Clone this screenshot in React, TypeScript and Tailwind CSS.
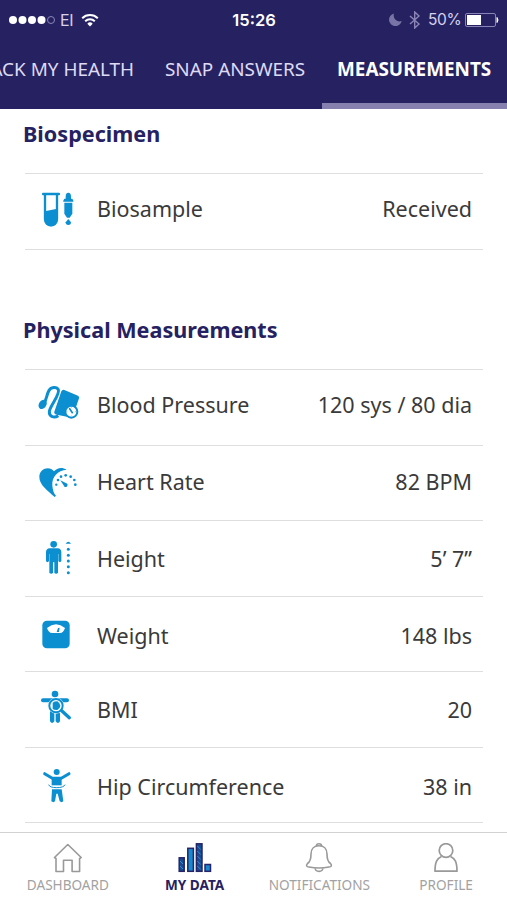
import type { ReactNode } from 'react';

const BLUE = '#0c8fd0';

function BiosampleIcon() {
  return (
    <svg viewBox="0 0 180 180" className="size-[60px] shrink-0" fill={BLUE}>
      <rect x="36" y="38" width="54" height="8" rx="3" />
      <path d="M45 44v74a18 18 0 0 0 36 0V44" fill="none" stroke={BLUE} strokeWidth="7" />
      <path d="M44 94l38-8v34a19 19 0 0 1-38 0z" />
      <path d="M107 50a8 12 0 0 1 16 0v6h4q5 8 3 9H100q-2-1 3-9h4z" />
      <path d="M103 68h24v33l-8 12h-8l-8-12z" />
      <path d="M115 117l8 10a8 8 0 1 1-16 0z" />
    </svg>
  );
}

function BloodPressureIcon() {
  return (
    <svg viewBox="0 0 180 180" className="size-[60px] shrink-0" fill={BLUE}>
      <path d="M94 49q3-6 9-4l41 17q5 3 3 8l-20 58-47-9q-9-3-7-9z" />
      <path d="M42 84c8-10 8-24 14-36 6-13 24-14 29-4 6 15-26 50-27 66-1 16 15 20 27 12" fill="none" stroke={BLUE} strokeWidth="9" />
      <ellipse cx="38" cy="88" rx="11" ry="15" transform="rotate(35 38 88)" />
      <circle cx="124" cy="110" r="18" fill="#fff" stroke={BLUE} strokeWidth="6" />
      <path d="M119 101l8 12" stroke={BLUE} strokeWidth="5" strokeLinecap="round" />
      <path d="M124 96v2M136 110h2M124 122v2M110 110h2" stroke={BLUE} strokeWidth="2" />
    </svg>
  );
}

function HeartRateIcon() {
  return (
    <svg viewBox="0 0 180 180" className="size-[60px] shrink-0" fill={BLUE}>
      <path d="M74 135C53 116 28 99 28 75c0-26 31-34 44-17 9-11 24-14 38-5-27 2-45 21-43 48 1 13 5 24 11 30z" />
      <circle cx="79" cy="98" r="3.5" />
      <circle cx="84" cy="84" r="4" />
      <circle cx="93" cy="74" r="4" />
      <circle cx="107" cy="70" r="4" />
      <circle cx="122" cy="74" r="4" />
      <circle cx="133" cy="84" r="4" />
      <circle cx="136" cy="98" r="4" />
      <path d="M91 85l21 10a7 7 0 0 1-8 10z" />
    </svg>
  );
}

function HeightIcon() {
  return (
    <svg viewBox="0 0 180 180" className="size-[60px] shrink-0" fill={BLUE}>
      <circle cx="71" cy="43" r="10" />
      <path d="M59 55h24q11 1 11 12v27q-4 5-9 0V72h-1v57q-6 5-11 0V97h-4v32q-5 5-11 0V72h-1v22q-5 5-9 0V67q0-11 11-12z" />
      <path d="M107 41q8-11 16 0z" />
      <circle cx="115" cy="58" r="4.5" />
      <circle cx="115" cy="76" r="4.5" />
      <circle cx="115" cy="93" r="4.5" />
      <circle cx="115" cy="110" r="4.5" />
      <circle cx="115" cy="128" r="4.5" />
    </svg>
  );
}

function WeightIcon() {
  return (
    <svg viewBox="0 0 180 180" className="size-[60px] shrink-0" fill={BLUE}>
      <rect x="37" y="47" width="82" height="83" rx="14" />
      <path d="M51 69q27-22 54 0-5 15-15 15H66q-10 0-15-15z" fill="#fff" />
      <path d="M80 81l4-12 5-1-2 13z" />
    </svg>
  );
}

function BmiIcon() {
  return (
    <svg viewBox="0 0 180 180" className="size-[60px] shrink-0" fill={BLUE}>
      <circle cx="75" cy="42" r="10" />
      <rect x="33" y="55" width="84" height="12" rx="6" />
      <path d="M60 62h30v62q-6 10-13 0V98h-4v26q-7 10-13 0z" />
      <circle cx="78" cy="77" r="24" fill="#fff" />
      <path d="M91 91l27 23" stroke="#fff" strokeWidth="15" />
      <circle cx="78" cy="77" r="20" fill="#fff" stroke={BLUE} strokeWidth="6" />
      <path d="M68 68q5-4 14-4 9 6 9 13t-9 13q-8 1-14-3z" />
      <path d="M95 92l23 21" stroke={BLUE} strokeWidth="10" strokeLinecap="round" />
    </svg>
  );
}

function HipIcon() {
  return (
    <svg viewBox="0 0 180 180" className="size-[60px] shrink-0" fill={BLUE}>
      <circle cx="80" cy="45" r="9" />
      <path d="M44 50l23 14h27l23-14" fill="none" stroke={BLUE} strokeWidth="9" strokeLinecap="round" strokeLinejoin="round" />
      <path d="M65 60h30v25H65z" />
      <path d="M66 97h29l5 36q-5 5-11 0l-6-23h-4l-4 23q-5 5-11 0z" />
      <path d="M56 83q3 9 24 9t25-9" fill="none" stroke={BLUE} strokeWidth="3" />
    </svg>
  );
}

type RowProps = {
  icon: ReactNode;
  label: string;
  value: string;
  className: string;
  iconClass: string;
  textClass: string;
};

const physicalRows: RowProps[] = [
  { icon: <BloodPressureIcon />, label: 'Blood Pressure', value: '120 sys / 80 dia', className: 'h-[76px]', iconClass: 'mt-[5px]', textClass: 'mt-5' },
  { icon: <HeartRateIcon />, label: 'Heart Rate', value: '82 BPM', className: 'h-[75px]', iconClass: 'mt-1.5', textClass: 'mt-[21px]' },
  { icon: <HeightIcon />, label: 'Height', value: '5’ 7”', className: 'h-[76px]', iconClass: 'mt-[9px]', textClass: 'mt-[23px]' },
  { icon: <WeightIcon />, label: 'Weight', value: '148 lbs', className: 'h-[75px]', iconClass: 'mt-2', textClass: 'mt-6' },
  { icon: <BmiIcon />, label: 'BMI', value: '20', className: 'h-[76px]', iconClass: 'mt-2', textClass: 'mt-[23px]' },
  { icon: <HipIcon />, label: 'Hip Circumference', value: '38 in', className: 'h-[75px]', iconClass: 'mt-[9px]', textClass: 'mt-6' },
];

function Row({ icon, label, value, className, iconClass, textClass }: RowProps) {
  return (
    <div className={`flex items-start border-t border-[#dedede] pl-[5px] pr-[11px] ${className}`}>
      <div className={`mr-[7px] ${iconClass}`}>{icon}</div>
      <div className={`flex flex-1 justify-between text-[21.5px] leading-[30px] text-[#3a3a3a] ${textClass}`}>
        <span>{label}</span>
        <span>{value}</span>
      </div>
    </div>
  );
}

function StatusBar() {
  return (
    <div className="flex h-[39px] items-center font-[Inter,sans-serif] text-[16px] leading-5 text-[#d5d1ec]">
      <div className="flex flex-1 items-center pl-[9px]">
        <svg viewBox="0 0 46 10" className="h-2.5 w-[46px]" fill="#fff">
          <circle cx="4" cy="5" r="4" />
          <circle cx="13.5" cy="5" r="4" />
          <circle cx="23" cy="5" r="4" />
          <circle cx="32.5" cy="5" r="4" />
          <circle cx="42" cy="5" r="3.5" fill="none" stroke="#8c87b8" />
        </svg>
        <span className="ml-[5px] w-[14px] tracking-tight">EI</span>
        <svg viewBox="0 0 18 14" className="ml-[7px] h-3.5 w-[18px]" fill="none" stroke="#fff" strokeWidth="2">
          <path d="M1.2 5.2a11.2 11.2 0 0 1 15.6 0M4.2 8.2a7 7 0 0 1 9.6 0" />
          <path d="M9 13.4L6.3 10.7a3.8 3.8 0 0 1 5.4 0z" fill="#fff" stroke="none" />
        </svg>
      </div>
      <span className="text-[16.5px] font-semibold text-white">15:26</span>
      <div className="flex flex-1 items-center justify-end pr-2">
        <svg viewBox="0 0 13 13" className="size-[13px]" fill="#7974a6">
          <path d="M5 .5A6.4 6.4 0 1 0 12.7 8 6 6 0 0 1 5 .5z" />
        </svg>
        <svg viewBox="0 0 12 18" className="ml-[7px] h-[18px] w-3" fill="none" stroke="#8a85b5" strokeWidth="1.4">
          <path d="M1 5l9 8-4.3 4V1L10 5l-9 8" />
        </svg>
        <span className="ml-[7px] w-[33px] text-[15.5px] tracking-[-0.4px]">50%</span>
        <svg viewBox="0 0 34 14" className="ml-1 h-3.5 w-[34px]">
          <rect x=".5" y=".5" width="30" height="13" rx="1.5" fill="none" stroke="#8983b6" />
          <rect x="2" y="2" width="14" height="10" fill="#fff" />
          <path d="M32 4.5q2 2.5 0 5z" fill="#fff" stroke="#fff" />
        </svg>
      </div>
    </div>
  );
}

function BottomNav() {
  return (
    <nav className="flex h-[68px] border-t border-[#d2d2d2] bg-white text-[13.6px] leading-[19px] text-[#a2a2a2]">
      <div className="flex w-[136px] flex-col items-center">
        <svg viewBox="0 0 30 32" className="mt-2.5 h-8 w-[30px]" fill="none" stroke="#999" strokeWidth="1.6" strokeLinejoin="round">
          <path d="M1.5 14.5L14.8 1.5 28.2 14.5l-1.6 1V28.5h-7.5V17.2h-8.6v11.3H3V15.5z" />
        </svg>
        <span>DASHBOARD</span>
      </div>
      <div className="flex w-[118px] flex-col items-center">
        <svg viewBox="0 0 34 32" className="mt-2.5 h-8 w-[34px]" stroke="#252469" strokeWidth="1.5">
          <rect x="1.2" y="14.8" width="5" height="13.5" fill="#174a91" />
          <rect x="9.8" y="5.3" width="5.6" height="23" fill="#1489cf" />
          <rect x="18.4" y=".8" width="5.6" height="27.5" fill="#174a91" />
          <rect x="27" y="21.5" width="5.5" height="6.8" fill="#1489cf" />
          <path d="M2 18l3 3M2 23l3 3M19.3 3l3.5 3.5M19.3 8l3.5 3.5M19.3 13l3.5 3.5M19.3 18l3.5 3.5M19.3 23l3.5 3.5" stroke="#2c91d2" strokeWidth="1" />
        </svg>
        <span className="font-bold text-[#262262]">MY DATA</span>
      </div>
      <div className="flex w-[132px] flex-col items-center">
        <svg viewBox="0 0 28 32" className="mt-2.5 h-8 w-7" fill="none" stroke="#999" strokeWidth="1.6" strokeLinejoin="round">
          <path d="M11.5 2.8a2.5 2 0 0 1 5 0M14 2.8C9 2.8 6 6 6 11c0 6-1 8-3.5 9.5-1.7 2-1 3.5 1.5 3.5 6 1.2 14 1.2 20 0 2.500 0 3.200-1.500 1.500-3.500C23 19 22 17 22 11c0-5-3-8.200-8-8.200zM10 25c.5 4.500 7.500 4.500 8 0" />
        </svg>
        <span>NOTIFICATIONS</span>
      </div>
      <div className="flex w-[122px] flex-col items-center">
        <svg viewBox="0 0 26 32" className="mt-2.5 h-8 w-[26px]" fill="none" stroke="#999" strokeWidth="1.7">
          <circle cx="13" cy="7.5" r="6.8" />
          <path d="M8.5 13.5C4 15.5 2 19 2 28.2h22c0-9.2-2-12.7-6.5-14.7" strokeLinejoin="round" />
        </svg>
        <span>PROFILE</span>
      </div>
    </nav>
  );
}

export default function App() {
  return (
    <div className="flex h-[900px] w-[507px] flex-col overflow-hidden bg-white font-['Noto_Sans',sans-serif]">
      <header className="h-[109px] shrink-0 bg-[#262262]">
        <StatusBar />
        <div className="flex h-[70px] overflow-hidden whitespace-nowrap text-[18.9px] leading-[60px] text-[#dedaf3]">
          <div className="flex w-[134px] shrink-0 justify-end">ACK MY HEALTH</div>
          <div className="ml-[31px] w-[157px] shrink-0">SNAP ANSWERS</div>
          <div className="w-[185px] shrink-0 border-b-[6px] border-[#8580ad] pl-[15px] font-bold text-white">MEASUREMENTS</div>
        </div>
      </header>
      <main className="h-[723px] shrink-0 overflow-hidden pl-[25px] pr-6">
        <h2 className="-ml-0.5 h-16 pt-2.5 text-[21.6px] font-bold leading-[30px] text-[#262262]">Biospecimen</h2>
        <div className="h-[77px] border-b border-[#dedede]">
          <Row icon={<BiosampleIcon />} label="Biosample" value="Received" className="h-[76px]" iconClass="mt-1.5" textClass="mt-5" />
        </div>
        <h2 className="-ml-0.5 h-[119px] pt-[65px] text-[21.6px] font-bold leading-[30px] text-[#262262]">Physical Measurements</h2>
        <div className="border-b border-[#dedede]">
          {physicalRows.map((row) => (
            <Row key={row.label} {...row} />
          ))}
        </div>
      </main>
      <BottomNav />
    </div>
  );
}
